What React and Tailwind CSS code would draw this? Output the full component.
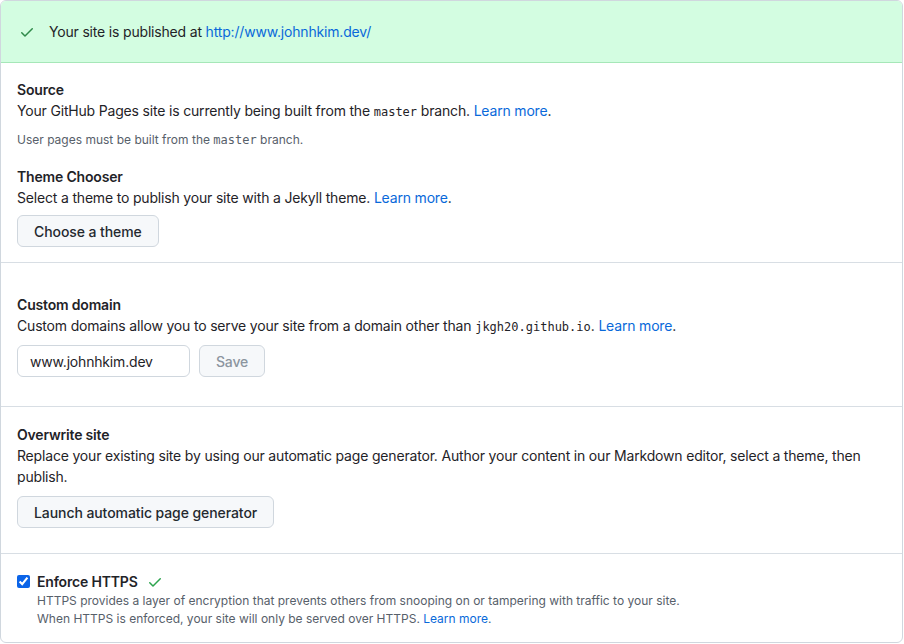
import React from "react";

const Check = ({ className }) => (
  <svg viewBox="0 0 16 16" width="16" height="16" className={className} fill="currentColor">
    <path d="M13.78 4.22a.75.75 0 010 1.06l-7.25 7.25a.75.75 0 01-1.06 0L2.22 9.28a.75.75 0 011.06-1.06L6 10.94l6.72-6.72a.75.75 0 011.06 0z" />
  </svg>
);

const Link = ({ children }) => <a className="text-[#0969da]">{children}</a>;
const Mono = ({ children }) => (
  <code className="text-[12px] tracking-normal" style={{ fontFamily: '"DejaVu Sans Mono", "Liberation Mono", monospace' }}>{children}</code>
);

export default function App() {
  return (
    <div className="bg-white" style={{ fontFamily: 'Inter, "Noto Sans", sans-serif' }}>
      <div className="w-[903px] border border-[#d0d7de] rounded-md overflow-hidden text-[14px] leading-[21px] tracking-[-0.18px] text-[#1f2328]">
        <div className="h-[62px] bg-[#d3fde1] border-b border-[#a6e7b8] flex items-center pl-[18px]">
          <Check className="text-[#2f8a4a]" />
          <span className="ml-[14px]">Your site is published at <Link>http://www.johnhkim.dev/</Link></span>
        </div>

        <div className="px-4 pt-4 pb-[15px] border-b border-[#d8dee4]">
          <div className="font-semibold">Source</div>
          <div>Your GitHub Pages site is currently being built from the <Mono>master</Mono> branch. <Link>Learn more</Link>.</div>
          <div className="mt-[8px] text-[12px] leading-[18px] tracking-normal text-[#57606a]">User pages must be built from the <Mono>master</Mono> branch.</div>
          <div className="font-semibold mt-[17px]">Theme Chooser</div>
          <div>Select a theme to publish your site with a Jekyll theme. <Link>Learn more</Link>.</div>
          <button className="mt-[7px] h-8 px-4 rounded-md border border-[#d0d7de] bg-[#f6f8fa] font-medium text-[14px] tracking-[-0.08px] text-[#24292f]">Choose a theme</button>
        </div>

        <div className="px-4 pt-[31px] pb-[29px] border-b border-[#d8dee4]">
          <div className="font-semibold">Custom domain</div>
          <div>Custom domains allow you to serve your site from a domain other than <Mono>jkgh20.github.io</Mono>. <Link>Learn more</Link>.</div>
          <div className="flex gap-[9px] mt-[7px]">
            <div className="w-[173px] h-8 rounded-md border border-[#d0d7de] flex items-center px-3 text-[14px]">www.johnhkim.dev</div>
            <button className="h-8 px-4 rounded-md border border-[#d0d7de] bg-[#f6f8fa] font-medium text-[14px] text-[#8c959f]">Save</button>
          </div>
        </div>

        <div className="px-4 pt-[17px] pb-[25px] border-b border-[#d8dee4]">
          <div className="font-semibold">Overwrite site</div>
          <div>Replace your existing site by using our automatic page generator. Author your content in our Markdown editor, select a theme, then publish.</div>
          <button className="mt-[9px] h-8 px-4 rounded-md border border-[#d0d7de] bg-[#f6f8fa] font-medium text-[14px] tracking-[-0.08px] text-[#24292f]">Launch automatic page generator</button>
        </div>

        <div className="px-4 pt-[17px] pb-[14px]">
          <div className="flex items-center">
            <input type="checkbox" defaultChecked className="w-[13px] h-[13px] accent-[#0b64e8] m-0" />
            <span className="font-semibold ml-[7px]">Enforce HTTPS</span>
            <Check className="ml-[9px] text-[#2da44e]" />
          </div>
          <div className="pl-[20px] text-[12px] leading-[18px] tracking-normal text-[#57606a]">
            <div>HTTPS provides a layer of encryption that prevents others from snooping on or tampering with traffic to your site.</div>
            <div>When HTTPS is enforced, your site will only be served over HTTPS. <Link>Learn more</Link>.</div>
          </div>
        </div>
      </div>
    </div>
  );
}
